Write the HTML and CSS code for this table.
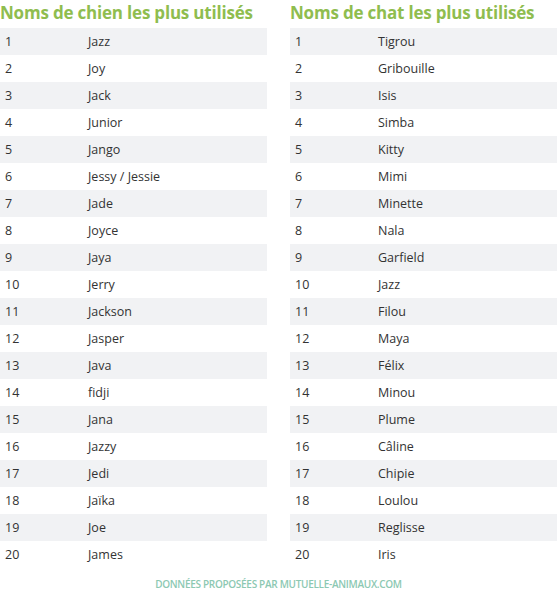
FILE: index.html
```html
<!DOCTYPE html>
<html lang="fr">
<head>
<meta charset="utf-8">
<link rel="stylesheet" href="styles.css">
</head>
<body>
<div class="page">
  <div class="cols">
    <section class="col">
      <h2 class="title">Noms de chien les plus utilisés</h2>
      <table class="list">
        <tr><td>1</td><td>Jazz</td></tr>
        <tr><td>2</td><td>Joy</td></tr>
        <tr><td>3</td><td>Jack</td></tr>
        <tr><td>4</td><td>Junior</td></tr>
        <tr><td>5</td><td>Jango</td></tr>
        <tr><td>6</td><td>Jessy / Jessie</td></tr>
        <tr><td>7</td><td>Jade</td></tr>
        <tr><td>8</td><td>Joyce</td></tr>
        <tr><td>9</td><td>Jaya</td></tr>
        <tr><td>10</td><td>Jerry</td></tr>
        <tr><td>11</td><td>Jackson</td></tr>
        <tr><td>12</td><td>Jasper</td></tr>
        <tr><td>13</td><td>Java</td></tr>
        <tr><td>14</td><td>fidji</td></tr>
        <tr><td>15</td><td>Jana</td></tr>
        <tr><td>16</td><td>Jazzy</td></tr>
        <tr><td>17</td><td>Jedi</td></tr>
        <tr><td>18</td><td>Jaïka</td></tr>
        <tr><td>19</td><td>Joe</td></tr>
        <tr><td>20</td><td>James</td></tr>
      </table>
    </section>
    <section class="col">
      <h2 class="title">Noms de chat les plus utilisés</h2>
      <table class="list">
        <tr><td>1</td><td>Tigrou</td></tr>
        <tr><td>2</td><td>Gribouille</td></tr>
        <tr><td>3</td><td>Isis</td></tr>
        <tr><td>4</td><td>Simba</td></tr>
        <tr><td>5</td><td>Kitty</td></tr>
        <tr><td>6</td><td>Mimi</td></tr>
        <tr><td>7</td><td>Minette</td></tr>
        <tr><td>8</td><td>Nala</td></tr>
        <tr><td>9</td><td>Garfield</td></tr>
        <tr><td>10</td><td>Jazz</td></tr>
        <tr><td>11</td><td>Filou</td></tr>
        <tr><td>12</td><td>Maya</td></tr>
        <tr><td>13</td><td>Félix</td></tr>
        <tr><td>14</td><td>Minou</td></tr>
        <tr><td>15</td><td>Plume</td></tr>
        <tr><td>16</td><td>Câline</td></tr>
        <tr><td>17</td><td>Chipie</td></tr>
        <tr><td>18</td><td>Loulou</td></tr>
        <tr><td>19</td><td>Reglisse</td></tr>
        <tr><td>20</td><td>Iris</td></tr>
      </table>
    </section>
  </div>
  <p class="source">DONNÉES PROPOSÉES PAR MUTUELLE-ANIMAUX.COM</p>
</div>
</body>
</html>
```
FILE: styles.css
```css
html, body {
  margin: 0;
  padding: 0;
  background: #ffffff;
}
body {
  font-family: "Open Sans", "Liberation Sans", sans-serif;
  color: #333333;
}
.page {
  width: 557px;
}
.cols {
  display: grid;
  grid-template-columns: 267px 267px;
  column-gap: 23px;
}
.title {
  margin: 0;
  height: 28px;
  font-size: 17px;
  line-height: 26px;
  font-weight: 700;
  color: #8fbd4f;
  white-space: nowrap;
  letter-spacing: -0.2px;
}
.list {
  width: 100%;
  border-collapse: collapse;
  font-size: 12.5px;
}
.list tr {
  height: 27px;
}
.list tr:nth-child(odd) {
  background: #f1f2f4;
}
.list td {
  padding: 0 0 0 5px;
  height: 27px;
  vertical-align: middle;
}
.list td:first-child {
  width: 78px;
}
.source {
  margin: 9px 0 0;
  text-align: center;
  font-size: 10px;
  font-weight: 600;
  color: #8cc8b2;
  letter-spacing: -0.3px;
}
```
